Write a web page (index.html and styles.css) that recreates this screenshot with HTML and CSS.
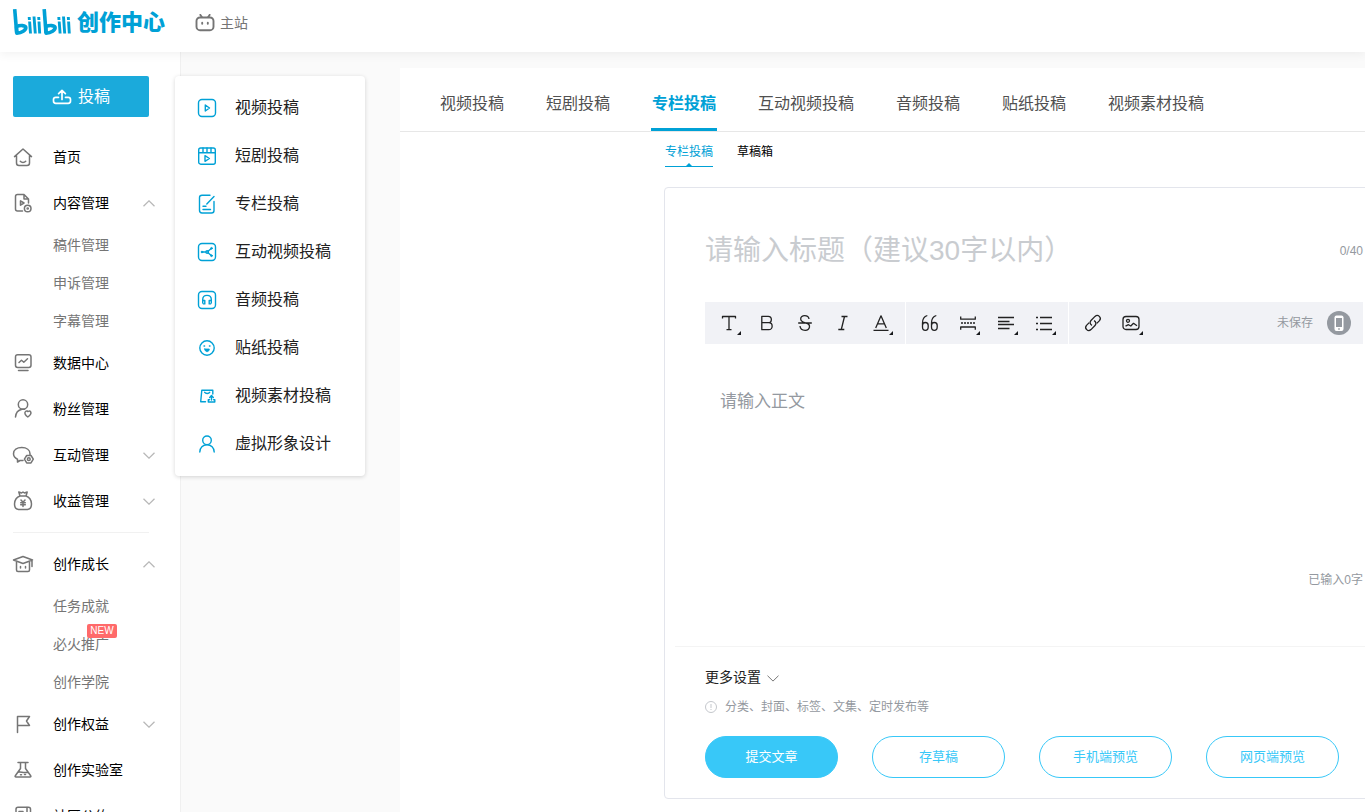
FILE: index.html
```html
<!DOCTYPE html>
<html lang="zh-CN">
<head>
<meta charset="utf-8">
<title>创作中心</title>
<link rel="stylesheet" href="styles.css">
</head>
<body>
<svg class="sprite" aria-hidden="true">
  <symbol id="up" viewBox="0 0 12 7"><path d="M.5 6.3 6 .9l5.500 5.400"/></symbol>
  <symbol id="down" viewBox="0 0 12 7"><path d="M.5.7 6 6.100 11.500.7"/></symbol>
</svg>

<header class="topbar">
  <a class="brand" href="#">
    <svg class="brand-mark" viewBox="0 0 60 30" role="img" aria-label="bilibili">
      <g fill="none" stroke="#00a1d6" stroke-linecap="butt">
        <path stroke-width="3.600" d="M2.700 1.200 4.700 25"/>
        <path stroke-width="3.600" stroke-linejoin="round" d="M4.500 18.800c3.500-2 9.200-1.500 9.300.8.200 2.400-4 5.200-9 5.600z"/>
        <path stroke-width="2.900" d="m17.600 13.500.9 12M22 8.500l1.300 17M27 13.500l.7 12"/>
        <path stroke-width="2.900" d="m17.200 9 .2 3M26.700 9l.2 3"/>
        <path stroke-width="3.600" d="M32.200 1.200 34 25"/>
        <path stroke-width="3.600" stroke-linejoin="round" d="M33.800 18.800c3.500-2 9.200-1.500 9.300.8.200 2.400-4 5.200-9 5.600z"/>
        <path stroke-width="2.900" d="m47.200 13.500.9 12M51.500 8.500l1.200 17M56.600 13.500l.7 12"/>
        <path stroke-width="2.900" d="m46.800 9 .2 3M56.300 9l.2 3"/>
      </g>
    </svg>
    <span class="brand-name">创作中心</span>
  </a>
  <a class="home-link" href="#">
    <svg class="home-icon" viewBox="0 0 20 18"><g fill="none" stroke="#757575" stroke-width="1.900" stroke-linecap="round"><rect x="1.500" y="3.500" width="17" height="12.700" rx="3.500"/><path d="M5.400.9 6.800 3.100M14.600.9 13.200 3.100M7.200 8.800v1M12.800 8.800v1"/></g></svg>
    <span>主站</span>
  </a>
</header>

<div class="layout">
  <nav class="sidebar" aria-label="创作中心">
    <button class="upload" type="button">
      <svg viewBox="0 0 20 16"><g fill="none" stroke="#fff" stroke-width="1.700" stroke-linecap="round" stroke-linejoin="round"><path d="M10 10.500V1.500M6.600 4.600 10 1.300l3.400 3.300M6.500 8.300H3.800q-2.300 0-2.300 2.200v1.500q0 2.300 2.300 2.300h12.400q2.300 0 2.300-2.300v-1.500q0-2.200-2.300-2.200h-2.700"/></g></svg>
      <span>投稿</span>
    </button>

    <a class="item" href="#"><svg class="icon" viewBox="0 0 22 22"><path d="M2.500 10.600 11 3l8.500 7.600M4.500 9.500V17q0 2.500 2.500 2.500h8q2.500 0 2.500-2.500V9.500M8.300 15.200c1.400 1.600 4 1.600 5.400 0"/></svg><span>首页</span></a>
    <button class="item" type="button"><svg class="icon" viewBox="0 0 22 22"><path d="M10.500 19H5.500Q3.500 19 3.500 17V4.500q0-2 2-2H12l4.500 4.500v4M12 2.500V7h4.500M8.500 8.800v4.400l3.500-2.200z"/><circle cx="15.700" cy="16.500" r="3.300"/><circle cx="15.700" cy="16.500" r=".6"/></svg><span>内容管理</span><svg class="chevron"><use href="#up"/></svg></button>
    <a class="subitem" href="#">稿件管理</a>
    <a class="subitem" href="#">申诉管理</a>
    <a class="subitem" href="#">字幕管理</a>
    <a class="item" href="#"><svg class="icon" viewBox="0 0 22 22"><rect x="3.500" y="2.700" width="15.500" height="12.800" rx="2.200"/><path d="m7 10.500 2.500-2.300 2.300 2 3.700-3.400M6.500 18.500h9.500"/></svg><span>数据中心</span></a>
    <a class="item" href="#"><svg class="icon" viewBox="0 0 22 22"><circle cx="11" cy="6.500" r="4.700"/><path d="M3.500 19c.3-4.500 2.700-7 6.500-7.800h2.500M13.500 13.500c1.500-1.200 2.300 0 2.300 0s2-1.200 3 .6c.8 2-1 3.500-3 4.900-2-1.400-4-4-2.300-5.500z"/></svg><span>粉丝管理</span></a>
    <button class="item" type="button"><svg class="icon" viewBox="0 0 22 22"><path d="M11 16.500H8L5.500 18v-2.800C3 14 1.500 12 1.500 9.800 1.500 6 5 3.500 9.800 3.500S18 6 18 9.800v.7M14.700 11.500h4.300l2.300 3.700-2.300 3.700h-4.300l-2.300-3.700z"/><circle cx="16.800" cy="15.200" r="1.400"/></svg><span>互动管理</span><svg class="chevron"><use href="#down"/></svg></button>
    <button class="item" type="button"><svg class="icon" viewBox="0 0 22 22"><path d="M8 6C1 8.500 1 19 6.500 19.500h9C21 19 21 8.500 14 6zM8 6 6.800 2l2.800 1L11 2l1.400 1 2.800-1L14 6M9 10l2 2.200 2-2.200M11 12.200v4.300M8.700 12.700h4.600M8.700 14.700h4.600"/></svg><span>收益管理</span><svg class="chevron"><use href="#down"/></svg></button>
    <hr class="rule">
    <button class="item" type="button"><svg class="icon" viewBox="0 0 22 22"><path d="m1.500 7 9.500-3.500L20.500 7 11 10.500zM4.500 9v8q0 1.500 1.500 1.500h10q1.500 0 1.500-1.500V9M20 8v5.500M8.500 13.500v1.500M13.500 13.500v1.500"/></svg><span>创作成长</span><svg class="chevron"><use href="#up"/></svg></button>
    <a class="subitem" href="#">任务成就</a>
    <a class="subitem" href="#">必火推广<em class="badge">NEW</em></a>
    <a class="subitem" href="#">创作学院</a>
    <button class="item" type="button"><svg class="icon" viewBox="0 0 22 22"><path d="M5.500 19.500V3.500h12l-3 4.500 3 4.500h-12"/></svg><span>创作权益</span><svg class="chevron"><use href="#down"/></svg></button>
    <a class="item" href="#"><svg class="icon" viewBox="0 0 22 22"><path d="M6 3.500h10M8.500 3.500v6l-5.200 7.300q-.6 1.200.7 1.200h14q1.300 0 .7-1.200L13.500 9.500v-6M5.800 13.200c3-1 5 1 10.300 0M8.500 15.700h1M12.500 15.500h1"/></svg><span>创作实验室</span></a>
    <a class="item" href="#"><svg class="icon" viewBox="0 0 22 22"><rect x="4" y="2.200" width="14.500" height="16" rx="2"/><path d="M15 2.500v15.500M7 6.500h4"/></svg><span>社区公约</span></a>

    <div class="flyout">
      <a href="#"><svg viewBox="0 0 20 20"><rect x="1.500" y="1.500" width="17" height="17" rx="3.500"/><path d="M8.300 7v6l4.200-3z"/></svg><span>视频投稿</span></a>
      <a href="#"><svg viewBox="0 0 20 20"><rect x="1.700" y="2" width="16.600" height="16.200" rx="2"/><path d="M2 6.700h16M6 2v4.500M10 2v4.500M14 2v4.500M8 9.700v5.600l4.400-2.800z"/></svg><span>短剧投稿</span></a>
      <a href="#"><svg viewBox="0 0 20 20"><path d="M13 1.300H5Q2.500 1.300 2.500 3.800v12.500Q2.500 19 5 19h9.500q2.500 0 2.500-2.500V7.500M17 2.500 9.800 10M6 12.200h3M6 15.500h7.500"/></svg><span>专栏投稿</span></a>
      <a href="#"><svg viewBox="0 0 20 20"><rect x="1.500" y="1.500" width="17" height="17" rx="3.500"/><path d="M5 10h4M11 9.200l3.300-2.700M11 10.800l3.300 2.700"/><circle cx="10.200" cy="10" r="1.300"/><g fill="#00a1d6" stroke-width=".8"><circle cx="5" cy="10" r=".9"/><circle cx="14.500" cy="6.300" r=".9"/><circle cx="14.500" cy="13.700" r=".9"/></g></svg><span>互动视频投稿</span></a>
      <a href="#"><svg viewBox="0 0 20 20"><rect x="1.500" y="1.500" width="17" height="17" rx="3.500"/><path d="M5.700 13V9.500c0-5.500 8.600-5.500 8.600 0V13M6 10.500h1.800v3.400H6.500M14 10.500h-1.800v3.400h1.300"/></svg><span>音频投稿</span></a>
      <a href="#"><svg viewBox="0 0 20 20"><circle cx="10" cy="10" r="7.200"/><path fill="#00a1d6" stroke-width=".8" d="M7.700 11h4.600c0 3.600-4.600 3.600-4.600 0z"/><path d="M7 8h.6M12.400 8h.6"/></svg><span>贴纸投稿</span></a>
      <a href="#"><svg viewBox="0 0 20 20"><path d="M8.500 15.700H3.700L4.800 4.300h11V8M7.700 6.300c1 1.500 4 1.500 5 0M14.500 14v-4M12.700 11.500l1.800-2 1.800 2M12.500 13.800h-1.200v2.200h6.500v-2.200h-1.200"/></svg><span>视频素材投稿</span></a>
      <a href="#"><svg viewBox="0 0 20 20"><circle cx="10" cy="6.300" r="4.300"/><path d="M2.800 18c0-4.500 3.200-7.200 7.200-7.200s7.200 2.700 7.200 7.200"/></svg><span>虚拟形象设计</span></a>
    </div>
  </nav>

  <main class="main">
    <nav class="tabs" aria-label="投稿类型">
      <a href="#">视频投稿</a>
      <a href="#">短剧投稿</a>
      <a class="active" href="#" aria-current="page">专栏投稿</a>
      <a href="#">互动视频投稿</a>
      <a href="#">音频投稿</a>
      <a href="#">贴纸投稿</a>
      <a href="#">视频素材投稿</a>
    </nav>

    <section class="article">
      <nav class="subtabs" aria-label="专栏">
        <a class="active" href="#">专栏投稿</a>
        <a href="#">草稿箱</a>
      </nav>

      <form class="card">
        <div class="editor">
          <div class="title-row">
            <input type="text" aria-label="标题" placeholder="请输入标题（建议30字以内）">
            <span class="count">0/40</span>
          </div>

          <div class="toolbar" role="toolbar" aria-label="格式">
            <div class="group">
              <button class="tool more" type="button" aria-label="字号"><svg viewBox="0 0 20 20"><path d="M3.500 5.500V3.500h13v2M10 3.500v13.200M7.500 16.700h5"/></svg></button>
              <button class="tool" type="button" aria-label="加粗"><svg viewBox="0 0 20 20"><path d="M4.800 3.300h6.400c4.200 0 4.200 6.400 0 6.400H4.800zM4.800 9.700h6.900c4.600 0 4.600 7 0 7H4.800z"/></svg></button>
              <button class="tool" type="button" aria-label="删除线"><svg viewBox="0 0 20 20"><path d="M14 6c-.5-4.500-8.500-4.500-8.300 0 .2 3.200 3.500 3.300 5.300 4 5.500 1.500 4 7.300-.8 7.300-3 0-5-1.600-5.200-4.300M3.200 10h13.600"/></svg></button>
              <button class="tool" type="button" aria-label="斜体"><svg viewBox="0 0 20 20"><path d="M8.500 3.500h6M5.300 16.500h6M11.500 3.500l-3.200 13"/></svg></button>
              <button class="tool more" type="button" aria-label="文字颜色"><svg viewBox="0 0 20 20"><path d="M4.700 15 10 2.800 15.300 15M6.700 10.800h6.600M2.500 17.300h15"/></svg></button>
            </div>
            <div class="group">
              <button class="tool" type="button" aria-label="引用"><svg viewBox="0 0 20 20"><path d="M7.300 2.500C4 3.500 2.500 6 2.500 10v4c0 4.500 5.700 4.500 5.700 0v-1.500c0-4-5.700-4-5.700 0M16.300 2.500C13 3.500 11.500 6 11.500 10v4c0 4.500 5.700 4.500 5.700 0v-1.500c0-4-5.700-4-5.700 0"/></svg></button>
              <button class="tool more" type="button" aria-label="分割线"><svg viewBox="0 0 20 20"><path d="M2.700 3.500v2.700h14.600V3.500M2.700 16.700V14h14.600v2.700"/><path stroke-dasharray="2 1" d="M3 10h14.500"/></svg></button>
              <button class="tool more" type="button" aria-label="对齐"><svg viewBox="0 0 20 20"><path d="M2 4.500h16M2 8.500h11.500M2 11.500h16M2 15.500h11.500"/></svg></button>
              <button class="tool more" type="button" aria-label="列表"><svg viewBox="0 0 20 20"><path d="M6 4.500h12M6 10.500h12M6 16.500h12M2 4.500h2M2 10.500h2M2 16.500h2"/></svg></button>
            </div>
            <div class="group">
              <button class="tool" type="button" aria-label="链接"><svg viewBox="0 0 20 20"><path d="M9 12.300c-2-.8-2.500-3.200-1-4.800l4-4.100c3-2.700 7 1.200 4.500 4.200l-2.700 2.800M11 7.700c2 .8 2.500 3.200 1 4.800l-4 4.100c-3 2.700-7-1.200-4.500-4.200l2.700-2.800"/></svg></button>
              <button class="tool more" type="button" aria-label="图片"><svg viewBox="0 0 20 20"><rect x="2" y="3.500" width="16" height="13" rx="3"/><circle cx="7" cy="7.800" r="1.500"/><path d="m4.500 13.200 3-1.500 2.300 1.300 2.700-2.700 3.500 2.500"/></svg></button>
            </div>
            <div class="status">
              <span>未保存</span>
              <button class="phone" type="button" aria-label="手机预览"><svg viewBox="0 0 24 24"><rect x="7.500" y="4.500" width="9" height="15.500" rx="2" fill="#fff"/><path fill="#9499a0" d="M9 7h6v9H9zM11.200 17.300h1.600v1.400h-1.600z"/></svg></button>
            </div>
          </div>

          <textarea class="content" aria-label="正文" placeholder="请输入正文"></textarea>
          <p class="words">已输入0字</p>
        </div>

        <div class="settings">
          <button class="expand" type="button">更多设置<svg class="chevron"><use href="#down"/></svg></button>
          <p class="hint"><svg viewBox="0 0 12 12"><circle cx="6" cy="6" r="5.500"/><path d="M6 3v4M6 8v1"/></svg>分类、封面、标签、文集、定时发布等</p>
          <div class="actions">
            <button class="primary" type="submit">提交文章</button>
            <button type="button">存草稿</button>
            <button type="button">手机端预览</button>
            <button type="button">网页端预览</button>
          </div>
        </div>
      </form>
    </section>
  </main>
</div>
</body>
</html>
```
FILE: styles.css
```css
* { box-sizing: border-box; }

body {
  margin: 0;
  height: 100vh;
  display: flex;
  flex-direction: column;
  overflow: hidden;
  background: #fafafa;
  color: #212121;
  font: 14px/20px "Liberation Sans", "Noto Sans CJK SC", sans-serif;
}

a { color: inherit; text-decoration: none; }
button, input, textarea { font: inherit; color: inherit; border: 0; padding: 0; background: none; }
button { cursor: pointer; }
p { margin: 0; }
svg { display: block; flex: none; }
.sprite { position: absolute; width: 0; height: 0; }

.topbar {
  position: relative;
  z-index: 1;
  flex: none;
  display: flex;
  align-items: center;
  gap: 30px;
  height: 52px;
  padding: 0 12px 6px;
  background: #fff;
  box-shadow: 0 2px 10px rgba(0, 0, 0, .06);
}
.brand { display: flex; align-items: center; gap: 5px; color: #00a1d6; }
.brand-mark { width: 60px; height: 30px; }
.brand-name { font-size: 22px; line-height: 28px; font-weight: 900; }
.home-link { display: flex; align-items: center; gap: 5px; color: #757575; }
.home-icon { width: 20px; height: 18px; }

.layout { flex: 1; display: flex; min-height: 0; }

.sidebar {
  position: relative;
  flex: none;
  width: 181px;
  padding-top: 24px;
  background: #fff;
  border-right: 1px solid #f0f0f0;
}
.upload {
  display: flex;
  align-items: center;
  justify-content: center;
  gap: 6px;
  width: 136px;
  height: 41px;
  margin: 0 0 17px 13px;
  border-radius: 2px;
  background: #1baadb;
  color: #fff;
  font-size: 16px;
}
.upload svg { width: 20px; height: 16px; }

.item {
  display: flex;
  align-items: center;
  gap: 19px;
  width: 100%;
  height: 46px;
  padding: 0 25px 0 12px;
  color: #000;
  text-align: left;
}
.icon {
  width: 22px;
  height: 22px;
  fill: none;
  stroke: #757575;
  stroke-width: 1.5;
  stroke-linecap: round;
  stroke-linejoin: round;
}
.chevron { width: 12px; height: 7px; fill: none; stroke: #b8b8b8; stroke-width: 1.3; }
.item .chevron { margin-left: auto; }
.subitem {
  position: relative;
  display: block;
  height: 38px;
  padding-left: 53px;
  color: #757575;
  line-height: 38px;
}
.badge {
  position: absolute;
  top: -1px;
  left: 87px;
  width: 30px;
  border-radius: 2px;
  background: #ff6a6a;
  color: #fff;
  font-size: 10px;
  line-height: 14px;
  font-style: normal;
  text-align: center;
}
.rule { height: 1px; margin: 8px 31px 8px 13px; border: 0; background: #f1f1f1; }

.flyout {
  position: absolute;
  z-index: 2;
  top: 24px;
  left: 175px;
  width: 190px;
  padding: 8px 0;
  border-radius: 4px;
  background: #fff;
  box-shadow: 0 1px 4px rgba(0, 0, 0, .16);
  font-size: 16px;
}
.flyout a { display: flex; align-items: center; gap: 18px; height: 48px; padding-left: 22px; }
.flyout svg {
  width: 20px;
  height: 20px;
  fill: none;
  stroke: #00a1d6;
  stroke-width: 1.4;
  stroke-linecap: round;
  stroke-linejoin: round;
}

.main {
  flex: 1 0 1004px;
  min-width: 1004px;
  margin: 16px 0 0 219px;
  background: #fff;
}
.tabs {
  display: flex;
  gap: 40px;
  height: 64px;
  padding-left: 39px;
  border-bottom: 1px solid #e7e7e7;
  color: #505050;
  font-size: 16px;
  line-height: 71px;
}
.tabs a { height: 63px; padding: 0 1px; }
.tabs .active { border-bottom: 3px solid #00a1d6; color: #00a1d6; font-weight: 700; }

.article { padding-left: 264px; }
.subtabs {
  display: flex;
  gap: 24px;
  height: 35px;
  padding-left: 1px;
  margin-bottom: 20px;
  font-size: 12px;
  line-height: 40px;
  color: #000;
}
.subtabs .active { position: relative; border-bottom: 1px solid #00a1d6; color: #00a1d6; }
.subtabs .active::after {
  content: "";
  position: absolute;
  bottom: 0;
  left: 50%;
  margin-left: -3px;
  border: 3px solid transparent;
  border-top: 0;
  border-bottom-color: #00a1d6;
}

.card { border: 1px solid #e3e5ec; border-radius: 4px; }
.editor { margin: 0 10px; padding: 42px 30px 56px; border-bottom: 1px solid #f4f4f4; }
.title-row { display: flex; align-items: center; height: 42px; margin-bottom: 30px; }
.title-row input { flex: 1; min-width: 0; height: 42px; font-size: 28px; outline: 0; }
.title-row input::placeholder { color: #c9ccd0; opacity: 1; }
.count, .words { color: #9499a0; font-size: 12px; }

.toolbar { display: flex; height: 42px; background: #f1f2f6; }
.group { display: flex; padding: 0 5px; border-right: 1px solid #fff; }
.group:nth-child(3) { border: 0; }
.tool {
  position: relative;
  display: flex;
  align-items: center;
  justify-content: center;
  width: 38px;
  height: 42px;
}
.tool svg { width: 20px; height: 20px; fill: none; stroke: #222; stroke-width: 1.3; stroke-linejoin: round; }
.more::after {
  content: "";
  position: absolute;
  right: 7px;
  bottom: 9px;
  border-left: 4px solid transparent;
  border-bottom: 4px solid #18191c;
}
.status {
  display: flex;
  align-items: center;
  gap: 14px;
  margin-left: auto;
  padding-right: 12px;
  color: #9499a0;
  font-size: 12px;
}
.phone { width: 24px; height: 24px; border-radius: 50%; background: #9499a0; }

.content {
  display: block;
  width: 100%;
  height: 226px;
  padding: 45px 15px;
  font-size: 17px;
  line-height: 26px;
  resize: none;
  outline: 0;
}
.content::placeholder { color: #9499a0; opacity: 1; }
.words { text-align: right; }

.settings { padding: 20px 40px; }
.expand { display: flex; align-items: center; gap: 6px; margin-bottom: 10px; }
.expand .chevron { stroke: #777; stroke-width: 1; margin-top: 2px; }
.hint { display: flex; align-items: center; gap: 8px; margin-bottom: 19px; color: #9499a0; font-size: 12px; }
.hint svg { width: 12px; height: 12px; fill: none; stroke: #c4c7cc; }
.actions { display: flex; gap: 34px; }
.actions button {
  width: 133px;
  height: 42px;
  border: 1px solid #38c8f8;
  border-radius: 21px;
  color: #38c8f8;
  font-size: 13px;
}
.actions .primary { background: #38c8f8; color: #fff; }
```
